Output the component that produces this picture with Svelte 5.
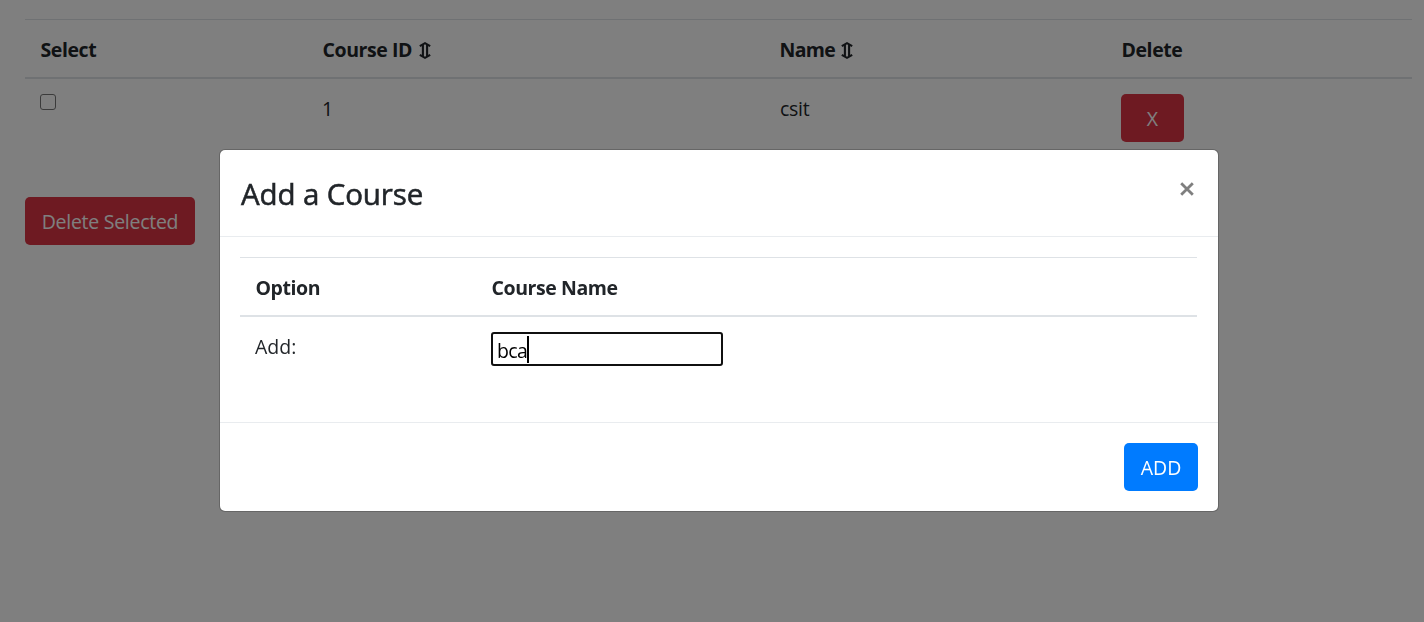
<script>
  const courses = [{ id: 1, name: 'csit' }];
  let draft = $state('bca');
</script>

{#snippet sortIcon()}
  <svg class="sort" width="12" height="17" viewBox="0 0 12 17" aria-hidden="true">
    <path d="M.8 4.1 6 1.2l5.2 2.9M.8 12.9 6 15.8l5.2-2.9M3.9 2.6v11.8M8.1 2.6v11.8" fill="none" stroke="currentColor" stroke-width="2.1" />
  </svg>
{/snippet}

<main class="page">
  <div class="table courses">
    <div class="row head">
      <div class="cell"><span>Select</span></div>
      <div class="cell"><span>Course ID</span>{@render sortIcon()}</div>
      <div class="cell title"><span>Name</span>{@render sortIcon()}</div>
      <div class="cell"><span>Delete</span></div>
    </div>
    {#each courses as course}
      <div class="row">
        <div class="cell"><span class="check"></span></div>
        <div class="cell"><span>{course.id}</span></div>
        <div class="cell"><span class="name">{course.name}</span></div>
        <div class="cell"><button class="btn danger small">X</button></div>
      </div>
    {/each}
  </div>
  <button class="btn danger wide">Delete Selected</button>
</main>

<div class="backdrop">
  <section class="modal">
    <header>
      <h4>Add a Course</h4>
      <button class="close" aria-label="Close">
        <svg width="14" height="14" viewBox="0 0 14 14"><path d="M1.2 1.2 12.8 12.8M12.8 1.2 1.2 12.8" stroke="#7f7f7f" stroke-width="2.8" /></svg>
      </button>
    </header>
    <div class="body">
      <div class="table form">
        <div class="row head">
          <div class="cell"><span>Option</span></div>
          <div class="cell"><span>Course Name</span></div>
        </div>
        <div class="row">
          <div class="cell"><span>Add:</span></div>
          <div class="cell"><div class="input"><span>{draft}</span><i class="caret"></i></div></div>
        </div>
      </div>
    </div>
    <footer><button class="btn primary">ADD</button></footer>
  </section>
</div>

<style>
  :global(body) {
    background: #fff;
    overflow: hidden;
  }
  .page,
  .backdrop {
    box-sizing: border-box;
    font: 400 19.5px/30px 'Open Sans', 'Noto Sans', sans-serif;
    color: #212529;
  }
  .page {
    height: 622px;
    padding: 19px 12px 0 25px;
  }
  .row {
    display: grid;
  }
  .courses .row {
    grid-template-columns: 282px 458px 341px 1fr;
  }
  .form .row {
    grid-template-columns: 236px 1fr;
  }
  .head {
    box-sizing: border-box;
    height: 60px;
    border-top: 1px solid #dee2e6;
    border-bottom: 2px solid #dee2e6;
    font-weight: 700;
    letter-spacing: -0.42px;
  }
  .cell {
    display: flex;
    align-items: flex-start;
    padding: 15px 15px 0;
  }
  .head span {
    padding-left: 0.5px;
  }
  .name {
    letter-spacing: -0.3px;
  }
  .sort {
    margin: 7px 0 0 7px;
  }
  .title {
    padding-left: 14px;
    letter-spacing: -0.65px;
  }
  .title .sort {
    margin-left: 6px;
  }
  .check {
    box-sizing: border-box;
    width: 16px;
    height: 16px;
    border: 1px solid #767676;
    border-radius: 3px;
    background: #fff;
  }
  .btn {
    box-sizing: border-box;
    height: 48px;
    padding: 2px 0 0;
    border: 0;
    border-radius: 5px;
    color: #fff;
    font: inherit;
    white-space: nowrap;
  }
  .danger {
    background: #dc3545;
  }
  .small {
    width: 63px;
  }
  .wide {
    display: block;
    width: 170px;
    margin-top: 55px;
    letter-spacing: -0.27px;
  }
  .primary {
    width: 74px;
    background: #007bff;
  }
  .backdrop {
    position: fixed;
    inset: 0;
    padding: 149px 0 0 219px;
    background: rgba(0, 0, 0, 0.5);
  }
  .modal {
    box-sizing: border-box;
    width: 1000px;
    height: 363px;
    border: 1px solid rgba(0, 0, 0, 0.2);
    border-radius: 6px;
    background: #fff;
    background-clip: padding-box;
  }
  header {
    box-sizing: border-box;
    display: flex;
    justify-content: space-between;
    height: 87px;
    padding: 21px 24px 0 21px;
    border-bottom: 1px solid #e9ecef;
  }
  h4 {
    margin: 0;
    font-size: 29.5px;
    font-weight: 400;
    line-height: 45px;
    letter-spacing: -0.12px;
    -webkit-text-stroke: 0.55px currentColor;
  }
  .close {
    display: flex;
    height: 14px;
    margin-top: 11px;
    padding: 0;
    border: 0;
    background: none;
  }
  .body {
    box-sizing: border-box;
    height: 185px;
    padding: 20px 21px 0 20px;
  }
  .input {
    box-sizing: border-box;
    display: flex;
    width: 232px;
    height: 34px;
    padding: 2px 4px 0;
    border: 2px solid #101010;
    border-radius: 3px;
    color: #000;
    letter-spacing: -0.6px;
  }
  .caret {
    width: 2px;
    height: 27px;
    background: #000;
  }
  footer {
    display: flex;
    justify-content: flex-end;
    padding: 20px;
    border-top: 1px solid #e9ecef;
  }
</style>
